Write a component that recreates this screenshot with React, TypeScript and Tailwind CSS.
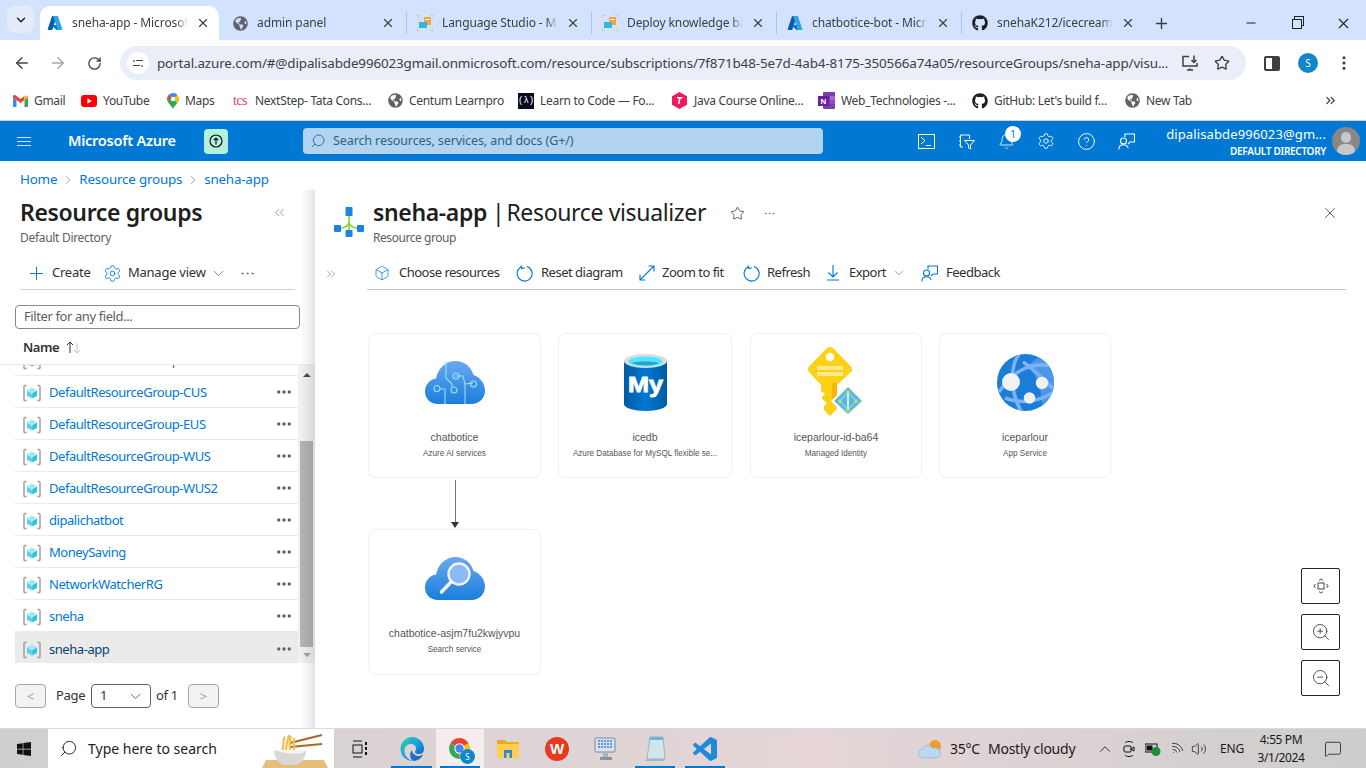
import {
  ArrowLeft, ArrowRight, RotateCw, Star, X, Plus, Minus, EllipsisVertical, Bell, Settings, CircleHelp,
  ChevronDown, ChevronUp, ChevronRight, ChevronsLeft, ChevronsRight, Box, ZoomIn, ZoomOut, Search, Ellipsis,
  Volume2, Wifi, MessageSquare,
} from 'lucide-react'
import { FaGithub, FaGlobeAmericas, FaWindows } from 'react-icons/fa'
import type { ReactNode } from 'react'

function AzureLogo({ size = 16 }: { size?: number }) {
  return (
    <svg width={size} height={size} viewBox="0 0 96 96">
      <path fill="#0a5cab" d="M33.34 6.54h26.04l-27.03 80.1a4.15 4.15 0 0 1-3.94 2.81H8.15a4.14 4.14 0 0 1-3.93-5.47L29.4 9.38a4.15 4.15 0 0 1 3.94-2.83z" />
      <path fill="#0078d4" d="M71.17 60.26H29.88a1.91 1.91 0 0 0-1.3 3.31l26.53 24.76a4.17 4.17 0 0 0 2.85 1.13h23.38z" />
      <path fill="#2fa4e7" d="M66.6 9.36a4.14 4.14 0 0 0-3.93-2.82H33.65a4.15 4.15 0 0 1 3.93 2.82l25.18 74.62a4.15 4.15 0 0 1-3.93 5.48h29.02a4.15 4.15 0 0 0 3.93-5.48z" />
    </svg>
  )
}

function StudioIcon() {
  return (
    <svg width="16" height="16" viewBox="0 0 16 16">
      <path d="M0 3V0h3M13 0h3v3M16 13v3h-3M3 16H0v-3" fill="none" stroke="#f0a33a" strokeWidth="0.8" />
      <rect x="7" y="2" width="7" height="8" fill="#f3a341" />
      <rect x="2" y="7" width="8" height="6" fill="#32b6dc" />
      <rect x="8.5" y="4" width="4" height="1" fill="#fff" />
    </svg>
  )
}

function GmailIcon() {
  return (
    <svg width="15" height="12" viewBox="0 0 15 12">
      <path d="M0 2v9a1 1 0 0 0 1 1h2.5V5z" fill="#4285f4" />
      <path d="M15 2v9a1 1 0 0 1-1 1h-2.5V5z" fill="#34a853" />
      <path d="M0 2l3.5 3L7.5 8 11.5 5V1L7.5 4 3.5 1 2 0H1.5A1.5 1.5 0 0 0 0 2z" fill="#ea4335" />
      <path d="M11.5 1v4L15 2.4V2a1.5 1.5 0 0 0-2.4-1.2z" fill="#fbbc04" />
    </svg>
  )
}

function YoutubeIcon() {
  return (
    <svg width="16" height="12" viewBox="0 0 16 12">
      <rect width="16" height="12" rx="3" fill="#f00" />
      <path d="M6.4 3.3 10.8 6l-4.4 2.7z" fill="#fff" />
    </svg>
  )
}

function MapsIcon() {
  return (
    <svg width="12" height="16" viewBox="0 0 12 16">
      <path d="M6 16C4.5 12.5 0 9.5 0 6h12c0 3.5-4.500 6.500-6 10z" fill="#34a853" />
      <path d="M0 6a6 6 0 0 1 2-4.400L6 6z" fill="#ea4335" />
      <path d="M2 1.600A6 6 0 0 1 10.500 2L6 6z" fill="#4285f4" />
      <path d="M10.500 2A6 6 0 0 1 12 6c0 1.500-1 3-2 4.200L6 6z" fill="#fbbc04" />
      <circle cx="6" cy="6" r="2.200" fill="#fff" />
    </svg>
  )
}

function FccIcon() {
  return (
    <div className="w-4 h-4 bg-[#0a0a23] text-white text-[9px] leading-4 text-center font-['Liberation_Mono',monospace]">(λ)</div>
  )
}

function JavaIcon() {
  return (
    <svg width="17" height="17" viewBox="0 0 17 17">
      <path d="M8.500 0 16 4.200v8.600L8.500 17 1 12.800V4.200z" fill="#ee1a5c" />
      <path d="M6 5h6l-1 1.500H9.500L8.500 12H7l1-5.500H6z" fill="#fff" />
    </svg>
  )
}

function OneNoteIcon() {
  return (
    <svg width="17" height="17" viewBox="0 0 17 17">
      <rect x="5" y="0" width="12" height="17" rx="1" fill="#7b3fb0" />
      <rect x="12" y="4" width="5" height="4" fill="#a566d6" />
      <rect x="12" y="8" width="5" height="4" fill="#8f4fc4" />
      <rect x="0" y="4" width="11" height="10" fill="#6a1f9e" />
      <text x="5.500" y="12" textAnchor="middle" fontSize="8" fontWeight="700" fill="#fff" fontFamily="Liberation Sans">N</text>
    </svg>
  )
}

const TABS: { label: string; icon: ReactNode; active?: boolean }[] = [
  { label: 'sneha-app - Microsoft Azure', icon: <AzureLogo />, active: true },
  { label: 'admin panel', icon: <FaGlobeAmericas size={15} color="#5f6368" /> },
  { label: 'Language Studio - Microsoft', icon: <StudioIcon /> },
  { label: 'Deploy knowledge base', icon: <StudioIcon /> },
  { label: 'chatbotice-bot - Microsoft', icon: <AzureLogo /> },
  { label: 'snehaK212/icecream_shop', icon: <FaGithub size={16} color="#1b1f23" /> },
]

function ChromeTab({ label, icon, active, last }: { label: string; icon: ReactNode; active?: boolean; last?: boolean }) {
  return (
    <div className="w-[185px] h-[34px] flex items-center shrink-0">
      <div className={active ? 'w-[179px] h-[34px] bg-white rounded-t-[10px] flex items-center pl-[7px]' : 'w-[181px] h-[34px] flex items-center pl-[7px]'}>
        <span className="w-4 flex justify-center shrink-0">{icon}</span>
        <span className="ml-[9px] w-[116px] whitespace-nowrap overflow-hidden text-[12px] text-[#3c4043] tracking-[-0.1px] [mask-image:linear-gradient(to_right,black_90%,transparent)]">{label}</span>
        <X size={14} strokeWidth={2} className="ml-[8px] text-[#3c4043] shrink-0" />
      </div>
      {!active && !last && <div className="w-px h-[22px] bg-[#a8c4ee]" />}
    </div>
  )
}

const BOOKMARKS: { label: string; icon: ReactNode; cls: string }[] = [
  { label: 'Gmail', icon: <GmailIcon />, cls: 'w-[68px]' },
  { label: 'YouTube', icon: <YoutubeIcon />, cls: 'w-[86px]' },
  { label: 'Maps', icon: <MapsIcon />, cls: 'w-[66px]' },
  { label: 'NextStep- Tata Cons...', icon: <span className="w-4 text-[14px] text-[#d6456c] font-['Liberation_Serif',serif] leading-none tracking-[-0.5px]">tcs</span>, cls: 'w-[155px]' },
  { label: 'Centum Learnpro', icon: <FaGlobeAmericas size={15} color="#5f6368" />, cls: 'w-[130px]' },
  { label: 'Learn to Code — Fo...', icon: <FccIcon />, cls: 'w-[153px]' },
  { label: 'Java Course Online...', icon: <JavaIcon />, cls: 'w-[147px]' },
  { label: 'Web_Technologies -...', icon: <OneNoteIcon />, cls: 'w-[154px]' },
  { label: "GitHub: Let's build f...", icon: <FaGithub size={16} color="#1b1f23" />, cls: 'w-[153px]' },
  { label: 'New Tab', icon: <FaGlobeAmericas size={15} color="#5f6368" />, cls: 'w-[80px]' },
]

function BrowserChrome() {
  return (
    <div className="shrink-0">
      <div className="h-10 bg-[#d3e3fd] flex items-end">
        <div className="w-[40px] h-[34px] self-end pl-[7px]">
          <div className="w-[27px] h-[27px] rounded-lg bg-[#e3ecfb] flex items-center justify-center">
            <ChevronDown size={14} strokeWidth={2.5} className="text-[#202124]" />
          </div>
        </div>
        {TABS.map((t, i) => <ChromeTab key={t.label} {...t} last={i === TABS.length - 1} />)}
        <div className="h-[34px] flex items-center ml-[3px]"><Plus size={17} strokeWidth={2} className="text-[#3c4043]" /></div>
        <div className="ml-auto h-[34px] flex items-center">
          <div className="w-[46px] flex justify-center"><Minus size={14} className="text-[#202124]" /></div>
          <div className="w-[46px] flex justify-center relative">
            <div className="w-[10px] h-[10px] border border-[#202124] mt-[2px] bg-[#d3e3fd] relative z-10" />
            <div className="absolute w-[10px] h-[10px] border border-[#202124] top-[-1px] left-[20px]" />
          </div>
          <div className="w-[46px] flex justify-center"><X size={17} strokeWidth={1.5} className="text-[#202124]" /></div>
        </div>
      </div>
      <div className="h-[41px] pt-[5px] bg-white flex items-center">
        <div className="w-[44px] flex justify-center"><ArrowLeft size={18} className="text-[#474747]" /></div>
        <div className="w-[28px] flex justify-center"><ArrowRight size={18} className="text-[#a8a8a8]" /></div>
        <div className="w-[44px] flex justify-center"><RotateCw size={15} strokeWidth={2.2} className="text-[#474747]" /></div>
        <div className="ml-[4px] w-[1126px] h-[34px] rounded-full bg-[#e9eef8] flex items-center">
          <div className="ml-[7px] w-[22px] h-[22px] rounded-full bg-white flex flex-col items-center justify-center gap-[3px]">
            <div className="flex items-center gap-[1px]"><span className="w-[2px] h-[2px] rounded-full border border-[#444]" /><span className="w-[7px] h-[1.500px] bg-[#444]" /></div>
            <div className="flex items-center gap-[1px]"><span className="w-[7px] h-[1.500px] bg-[#444]" /><span className="w-[2px] h-[2px] rounded-full border border-[#444]" /></div>
          </div>
          <span className="ml-[8px] w-[1014px] text-[13.430px] text-[#3c4043] whitespace-nowrap overflow-hidden tracking-[-0.13px]">portal.azure.com/#@dipalisabde996023gmail.onmicrosoft.com/resource/subscriptions/7f871b48-5e7d-4ab4-8175-350566a74a05/resourceGroups/sneha-app/visu...</span>
          <svg width="18" height="18" viewBox="0 0 18 18" className="ml-[10px]" fill="none" stroke="#3c4043" strokeWidth="1.500">
            <path d="M8 2.500H2v9.500h14V9" /><path d="M9 14.500v1M6 16h6" /><path d="M13 1.500v7M10.500 6l2.500 2.500L15.500 6" />
          </svg>
          <Star size={16} strokeWidth={2} className="ml-[15px] text-[#3c4043]" />
        </div>
        <div className="ml-[18px] w-[16px] h-[15px] border-2 border-[#3c4043] rounded-[2px] flex justify-end"><div className="w-[6px] bg-[#3c4043]" /></div>
        <div className="ml-[18px] w-5 h-5 rounded-full bg-[#0f87c9] text-white text-[10px] leading-5 text-center">S</div>
        <EllipsisVertical size={18} strokeWidth={2.2} className="ml-[17px] text-[#3c4043]" />
      </div>
      <div className="h-[40px] bg-white flex items-center pl-[13px] border-b border-[#cfcfcf]">
        {BOOKMARKS.map(b => (
          <div key={b.label} className={`${b.cls} flex items-center gap-[6px] shrink-0`}>
            {b.icon}
            <span className="text-[12px] text-[#3c4043] whitespace-nowrap tracking-[-0.3px]">{b.label}</span>
          </div>
        ))}
        <ChevronsRight size={15} strokeWidth={2} className="ml-[118px] text-[#3c4043]" />
      </div>
    </div>
  )
}

function PortalHeader() {
  return (
    <div className="h-10 bg-[#0078d4] flex items-center shrink-0 text-white">
      <div className="ml-[17px] w-[14px] flex flex-col gap-[3px]">
        <span className="h-px bg-[#cfe5f6]" /><span className="h-px bg-[#cfe5f6]" /><span className="h-px bg-[#cfe5f6]" />
      </div>
      <span className="ml-[37px] w-[136px] text-[14.5px] font-semibold tracking-[-0.25px] whitespace-nowrap">Microsoft Azure</span>
      <div className="w-6 h-[25px] rounded-sm bg-[#b4f1dc] flex items-center justify-center">
        <svg width="14" height="14" viewBox="0 0 14 14" fill="none" stroke="#111" strokeWidth="1.200">
          <circle cx="7" cy="7" r="6" /><path d="M7 10.500V4M4.800 6.200 7 4l2.200 2.200" />
        </svg>
      </div>
      <div className="ml-[75px] w-[520px] h-[26px] rounded-sm bg-[#b3d4f0] flex items-center">
        <Search size={16} strokeWidth={1.4} className="ml-[7px] text-[#2a6aa0] -scale-x-100" />
        <span className="ml-[7px] mt-px text-[12.500px] text-[#2f5f88] tracking-[-0.1px] whitespace-nowrap">Search resources, services, and docs (G+/)</span>
      </div>
      <div className="ml-[83px] flex items-center">
        <div className="w-10 flex justify-center">
          <svg width="17" height="15" viewBox="0 0 17 15" fill="none" stroke="#fff"><rect x="0.500" y="0.500" width="16" height="14" /><path d="m3 3 4 3.500L3 10M8 11.500h5" /></svg>
        </div>
        <div className="w-10 flex justify-center">
          <svg width="17" height="17" viewBox="0 0 17 17" fill="none" stroke="#fff"><path d="M5 14H2.500V2h9v4M1 4h2M1 8h2M1 12h2" /><path d="M6.500 7.500h10l-4 4.500v4l-2-1v-3z" /></svg>
        </div>
        <div className="w-10 flex justify-center relative">
          <Bell size={17} strokeWidth={1.2} />
          <span className="absolute -top-[7px] left-[19px] w-4 h-4 rounded-full bg-white text-[#0078d4] text-[10px] leading-4 text-center">1</span>
        </div>
        <div className="w-10 flex justify-center"><Settings size={18} strokeWidth={1.2} /></div>
        <div className="w-10 flex justify-center"><CircleHelp size={19} strokeWidth={1.2} /></div>
        <div className="w-10 flex justify-center"><FeedbackIcon color="#fff" /></div>
      </div>
      <div className="ml-auto flex flex-col items-end w-[170px] pt-[2px]">
        <span className="text-[13px] leading-[17px] whitespace-nowrap tracking-[0.12px]">dipalisabde996023@gm...</span>
        <span className="mt-[2px] text-[10px] leading-[13px] font-semibold whitespace-nowrap tracking-[-0.3px]">DEFAULT DIRECTORY</span>
      </div>
      <div className="ml-[6px] mr-[6px] w-7 h-7 rounded-full bg-[#8a8886] overflow-hidden relative">
        <div className="absolute left-[9px] top-[5px] w-[10px] h-[11px] rounded-full bg-[#c8c8c8]" />
        <div className="absolute left-[5px] top-[17px] w-[18px] h-[14px] rounded-full bg-[#c8c8c8]" />
      </div>
    </div>
  )
}

function FeedbackIcon({ color }: { color: string }) {
  return (
    <svg width="17" height="17" viewBox="0 0 17 17" fill="none" stroke={color} strokeWidth="1.100">
      <circle cx="5.500" cy="8" r="3" />
      <path d="M0.800 16.500c0-3 2-4.800 4.700-4.800s4.200 1.500 4.700 3.500" />
      <path d="M7 4V1h9.500v8H12l-2 2" />
    </svg>
  )
}

function GroupIcon() {
  return (
    <svg width="18" height="18" viewBox="0 0 18 18" className="shrink-0">
      <path d="M3.500 1.500H1.800a.8.8 0 0 0-.8.8v13.400a.8.8 0 0 0 .8.8h1.700M14.500 1.500h1.700a.8.8 0 0 1 .8.8v13.400a.8.8 0 0 1-.8.8h-1.700" fill="none" stroke="#9a9a9a" strokeWidth="1.400" />
      <path d="M9 3.500 14 6.200 9 9 4 6.200z" fill="#9debf7" />
      <path d="M4 6.500 8.800 9.200v5.300L4 11.800z" fill="#50d4f0" />
      <path d="M14 6.500 9.200 9.200v5.300L14 11.800z" fill="#2fbde6" />
    </svg>
  )
}

const GROUPS = [
  'DefaultResourceGroup-CID', 'DefaultResourceGroup-CUS', 'DefaultResourceGroup-EUS', 'DefaultResourceGroup-WUS',
  'DefaultResourceGroup-WUS2', 'dipalichatbot', 'MoneySaving', 'NetworkWatcherRG', 'sneha', 'sneha-app',
]

function LeftPanel() {
  return (
    <div className="w-[315px] shrink-0 relative flex flex-col">
      <div className="absolute right-0 inset-y-0 w-[15px] bg-gradient-to-r from-transparent to-black/10 pointer-events-none z-10" />
      <div className="mt-[6px] pl-5 pr-[28px] h-8 flex items-center justify-between">
        <span className="text-[23px] font-semibold text-[#201f1e] whitespace-nowrap tracking-[-0.35px]">Resource groups</span>
        <ChevronsLeft size={15} strokeWidth={1} className="text-[#605e5c]" />
      </div>
      <div className="pl-5 mt-[2px] h-4 text-[12px] leading-4 text-[#605e5c] tracking-[-0.3px]">Default Directory</div>
      <div className="mt-[11px] ml-5 w-[275px] h-[33px] flex items-center border-b border-[#d2d0ce] text-[13px] text-[#323130] tracking-[-0.25px]">
        <Plus size={21} strokeWidth={1.1} className="ml-[6px] text-[#0078d4]" />
        <span className="ml-[5px] w-[37px] whitespace-nowrap">Create</span>
        <Settings size={19} strokeWidth={1.1} className="ml-[14px] text-[#0078d4]" />
        <span className="ml-[6px] w-[76px] whitespace-nowrap">Manage view</span>
        <ChevronDown size={17} strokeWidth={1} className="ml-[6px] text-[#605e5c]" />
        <Ellipsis size={17} strokeWidth={1} className="ml-[12px] text-[#605e5c]" />
      </div>
      <div className="mt-[15px] ml-[15px] w-[285px] h-6 rounded-sm border border-[#8a8886] flex items-center pl-2 text-[13px] text-[#605e5c] tracking-[-0.4px]">Filter for any field...</div>
      <div className="ml-[23px] h-[35px] pt-[2px] flex items-center text-[13px] font-semibold text-[#323130] tracking-[-0.5px]">
        <span className="w-[43px]">Name</span>
        <svg width="16" height="13" viewBox="0 0 16 13" fill="none">
          <path d="M4 12V1M1 4l3-3 3 3" stroke="#323130" />
          <path d="M11 2v10M8 9l3 3 3-3" stroke="#c8c6c4" />
        </svg>
      </div>
      <div className="flex h-[299px] border-t border-[#edebe9]">
        <div className="ml-[15px] w-[283px] overflow-hidden">
          <div className="-mt-[21px]">
            {GROUPS.map(g => (
              <div key={g} className={g === 'sneha-app' ? 'h-8 pt-[3px] flex items-center bg-[#edebe9] pl-2' : 'h-8 pt-[3px] flex items-center border-b border-[#edebe9] pl-2'}>
                <GroupIcon />
                <span className={g === 'sneha-app' ? 'ml-2 text-[13px] text-[#004578] tracking-[-0.45px]' : 'ml-2 text-[13px] text-[#0078d4] tracking-[-0.45px]'}>{g}</span>
                <Ellipsis size={18} strokeWidth={2.4} className="ml-auto mr-[5px] -mt-[2px] text-[#605e5c]" />
              </div>
            ))}
          </div>
        </div>
        <div className="w-[17px] bg-[#f1f1f1] flex flex-col items-center">
          <div className="h-[76px] w-full flex justify-center pt-[8px]">
            <div className="w-0 h-0 border-x-[4px] border-x-transparent border-b-[4px] border-b-[#505050]" />
          </div>
          <div className="w-[13px] h-[206px] bg-[#b4b4b4]" />
          <div className="mt-[6px] w-0 h-0 border-x-[4px] border-x-transparent border-t-[4px] border-t-[#a0a0a0]" />
        </div>
      </div>
      <div className="mt-[21px] ml-[15px] flex items-center h-6 text-[13px] text-[#323130]">
        <div className="w-[31px] h-6 border border-[#a8a6a4] bg-[#f3f2f1] rounded-sm text-center text-[#a19f9d] leading-[22px]">&lt;</div>
        <span className="ml-[10px] w-[35px] tracking-[-0.3px]">Page</span>
        <div className="w-[60px] h-6 border border-[#605e5c] rounded-sm flex items-center pl-2">
          1
          <ChevronDown size={17} strokeWidth={1} className="ml-auto mr-[6px]" />
        </div>
        <span className="ml-[5px] w-[32px] tracking-[-0.3px]">of 1</span>
        <div className="w-[31px] h-6 border border-[#a8a6a4] bg-[#f3f2f1] rounded-sm text-center text-[#a19f9d] leading-[22px]">&gt;</div>
      </div>
    </div>
  )
}

function ResetIcon() {
  return (
    <svg width="17" height="17" viewBox="0 0 17 17" fill="none" stroke="#0078d4" strokeWidth="1.100">
      <path d="M5.500 1.800A7.500 7.500 0 1 0 11 1.500" />
      <path d="M5 .5l.8 3 3-.8" />
    </svg>
  )
}

function BladeToolbar() {
  const cls = 'text-[13px] text-[#323130] whitespace-nowrap tracking-[-0.5px]'
  return (
    <div className="flex h-[33px]">
      <div className="w-[52px] pl-[9px] flex items-center"><ChevronsRight size={14} strokeWidth={1} className="text-[#605e5c]" /></div>
      <div className="flex-1 mr-[20px] flex items-center border-b border-[#c8c6c4]">
        <Box size={16} strokeWidth={1.1} className="ml-[7px] text-[#0078d4]" />
        <span className={`${cls} ml-[9px] w-[102px]`}>Choose resources</span>
        <span className="ml-[15px]"><ResetIcon /></span>
        <span className={`${cls} ml-[8px] w-[82px]`}>Reset diagram</span>
        <svg width="16" height="16" viewBox="0 0 16 16" className="ml-[16px]" fill="none" stroke="#0078d4" strokeWidth="1.100"><path d="M1 15 15 1M9.500 1H15v5.500M1 9.500V15h5.500" /></svg>
        <span className={`${cls} ml-[7px] w-[65px]`}>Zoom to fit</span>
        <span className="ml-[16px]"><ResetIcon /></span>
        <span className={`${cls} ml-[7px] w-[43px]`}>Refresh</span>
        <svg width="14" height="16" viewBox="0 0 14 16" className="ml-[16px]" fill="none" stroke="#0078d4" strokeWidth="1.100"><path d="M7 0v12M2.500 7.500 7 12l4.500-4.500M1 15h12" /></svg>
        <span className={`${cls} ml-[9px] w-[37px]`}>Export</span>
        <ChevronDown size={14} strokeWidth={1} className="ml-[6px] text-[#605e5c]" />
        <span className="ml-[15px]"><FeedbackIcon color="#0078d4" /></span>
        <span className={`${cls} ml-[8px]`}>Feedback</span>
      </div>
    </div>
  )
}

function Cloud({ id, children }: { id: string; children?: ReactNode }) {
  return (
    <svg width="60" height="43" viewBox="0 0 60 43">
      <defs>
        <linearGradient id={id} x1="0" y1="0" x2="0" y2="1">
          <stop offset="0" stopColor="#6ba8f1" />
          <stop offset="1" stopColor="#1a7fdb" />
        </linearGradient>
      </defs>
      <path d="M13 43C5.500 43 0 37.500 0 30.500 0 24 4.500 18.500 11 17.500 13 7.500 20.500 0 30.500 0 39 0 46 5.500 48.500 14 55 16 60 22.500 60 29.500 60 37.500 54 43 46.500 43z" fill={`url(#${id})`} />
      {children}
    </svg>
  )
}

function AiIcon() {
  return (
    <Cloud id="aiCloud">
      <g fill="none" stroke="#9fdcf8" strokeWidth="1.100">
        <path d="M21 0v17l6 6v3M20 43V28h-5" />
        <circle cx="12" cy="27.500" r="3" />
        <circle cx="29" cy="29" r="3" />
        <path d="M40 43V23l8-1" />
        <circle cx="48.500" cy="23" r="3" />
        <path d="M30 15h8l2 8" />
        <circle cx="31" cy="15" r="3" />
      </g>
    </Cloud>
  )
}

function SearchCloud() {
  return (
    <Cloud id="searchCloud">
      <circle cx="34" cy="17" r="10.500" fill="#8ab9f7" stroke="#f2f2f2" strokeWidth="2.400" />
      <path d="M26 25 16.500 35" stroke="#f2f2f2" strokeWidth="3.600" strokeLinecap="round" />
    </Cloud>
  )
}

function MySqlIcon() {
  return (
    <svg width="43" height="57" viewBox="0 0 43 57">
      <defs>
        <linearGradient id="mysqlBody" x1="0" y1="0" x2="1" y2="0">
          <stop offset="0" stopColor="#005ba1" />
          <stop offset="0.5" stopColor="#0078d4" />
          <stop offset="1" stopColor="#005ba1" />
        </linearGradient>
      </defs>
      <path d="M0 7v43c0 4 10 7 21.500 7S43 54 43 50V7z" fill="url(#mysqlBody)" />
      <ellipse cx="21.500" cy="7" rx="21.500" ry="7" fill="#d9dde0" />
      <ellipse cx="21.500" cy="7.500" rx="17" ry="5" fill="#50e6ff" />
      <path d="M8 9c4-2 22-2 27 0-4 3-23 3-27 0z" fill="#2aa3c8" />
      <text x="21.500" y="38" textAnchor="middle" fontSize="22" fontWeight="700" fill="#fff" stroke="#fff" strokeWidth="0.8" fontFamily="Liberation Sans" textLength="35" lengthAdjust="spacingAndGlyphs">My</text>
    </svg>
  )
}

function KeyIcon() {
  return (
    <svg width="57" height="70" viewBox="0 0 57 70">
      <path d="M22 0c1.500 0 2.500.5 3.500 1.500L42.500 19c2 2 2 4.500 0 6.500L29 38V62L22 69 16 63V59L19 56 14 52V50L17 47 13 44V38L1.500 25.500c-2-2-2-4.500 0-6.500L18.500 1.500C19.500.5 20.500 0 22 0z" fill="#fcd116" />
      <path d="M24 36h5v16h-5z" fill="#f7a707" opacity=".7" />
      <circle cx="22" cy="10" r="4.200" fill="#fff" />
      <rect x="9" y="19" width="26" height="4" fill="#ffe98a" />
      <rect x="9" y="25" width="26" height="4" fill="#ffe98a" />
      <path d="M40 37 57 54 40 70 23 54z" fill="#fff" />
      <path d="M40 40 54 54 40 67 26 54z" fill="#5ab9dc" />
      <path d="M40 45 48 54 40 63 32 54z" fill="none" stroke="#c6e9f5" strokeWidth=".8" />
      <path d="M40 45v18" stroke="#fff" strokeWidth="1.500" />
      <circle cx="40" cy="45" r="1.800" fill="#c5e05a" />
      <circle cx="32" cy="54" r="1.800" fill="#c5e05a" />
      <circle cx="48" cy="54" r="1.800" fill="#c5e05a" />
      <circle cx="40" cy="63" r="1.800" fill="#c5e05a" />
    </svg>
  )
}

function AppServiceIcon() {
  return (
    <svg width="57" height="57" viewBox="0 0 57 57">
      <defs>
        <clipPath id="globeClip"><circle cx="28.500" cy="28.500" r="28.500" /></clipPath>
      </defs>
      <circle cx="28.500" cy="28.500" r="28.500" fill="#1a7ed8" />
      <g clipPath="url(#globeClip)">
        <path d="M30 12c10 8 14 20 16 45h11V10L40 4z" fill="#5a9eec" opacity=".8" />
        <g fill="none" stroke="#7db2f2" strokeWidth="3.500">
          <path d="M2 38C18 14 36 8 57 12" />
          <path d="M22 0C12 14 14 40 24 57" />
          <path d="M8 44c16 6 34 4 49-6" />
          <path d="M26 8c10 6 20 18 30 26" />
        </g>
      </g>
      <circle cx="14" cy="28" r="9" fill="#f2f2f2" />
      <circle cx="45" cy="29" r="6.200" fill="#f2f2f2" />
      <circle cx="32.500" cy="44" r="5.800" fill="#f2f2f2" />
    </svg>
  )
}

function NodeCard({ cls, name, kind, children }: { cls: string; name: string; kind: string; children: ReactNode }) {
  return (
    <div className={`absolute ${cls} rounded-lg border border-[#f2f2f2] bg-white shadow-[0_0_2px_rgba(0,0,0,0.04)] flex flex-col items-center font-['Liberation_Sans',sans-serif]`}>
      <div className="h-[98px] -mt-px flex items-center justify-center">{children}</div>
      <div className="h-3 text-[10.500px] leading-3 text-[#555] whitespace-nowrap">{name}</div>
      <div className="h-[22px] text-[8.150px] leading-[22px] text-[#555] whitespace-nowrap">{kind}</div>
    </div>
  )
}

function MapButton({ children }: { children: ReactNode }) {
  return (
    <div className="w-[39px] h-[36px] rounded-[2px] border border-[#222] bg-white flex items-center justify-center">{children}</div>
  )
}

function RightBlade() {
  return (
    <div className="flex-1 flex flex-col min-w-0">
      <div className="h-[67px] flex items-start relative">
        <svg width="32" height="30" viewBox="0 0 32 30" className="ml-[18px] mt-[17px]" fill="none">
          <path d="M16 6v20M16 15c0 4-6 6-10 7M16 15c0 4 6 6 10 7" stroke="#86d633" strokeWidth="1.600" />
          <rect x="12.500" y="0" width="7" height="9" rx="1" fill="#1b84de" />
          <rect x="1" y="18" width="7" height="7" rx="1" fill="#1b84de" />
          <rect x="24" y="18" width="7" height="7" rx="1" fill="#1b84de" />
          <rect x="12.500" y="23" width="7" height="7" rx="1" fill="#1b84de" />
        </svg>
        <div className="ml-[8px] mt-[6px]">
          <div className="h-8 flex items-center text-[23px] text-[#201f1e] whitespace-nowrap tracking-[-0.35px]">
            <span className="font-semibold">sneha-app</span>
            <span className="ml-[5px]">|</span>
            <span className="ml-[2px]">Resource visualizer</span>
          </div>
          <div className="mt-[2px] h-4 text-[12px] leading-4 text-[#605e5c] tracking-[-0.45px]">Resource group</div>
        </div>
        <Star size={15} strokeWidth={1.2} className="ml-[24px] mt-[16px] text-[#323130]" />
        <Ellipsis size={13} strokeWidth={1} className="ml-[18px] mt-[17px] text-[#605e5c]" />
        <X size={18} strokeWidth={1} className="absolute left-[1006px] top-[14px] text-[#323130]" />
      </div>
      <BladeToolbar />
      <div className="flex-1 relative">
        <NodeCard cls="left-[53px] top-[43px] w-[173px] h-[145px]" name="chatbotice" kind="Azure AI services"><AiIcon /></NodeCard>
        <NodeCard cls="left-[243px] top-[43px] w-[174px] h-[145px]" name="icedb" kind="Azure Database for MySQL flexible se..."><MySqlIcon /></NodeCard>
        <NodeCard cls="left-[435px] top-[43px] w-[172px] h-[145px]" name="iceparlour-id-ba64" kind="Managed Identity"><KeyIcon /></NodeCard>
        <NodeCard cls="left-[624px] top-[43px] w-[172px] h-[145px]" name="iceparlour" kind="App Service"><AppServiceIcon /></NodeCard>
        <NodeCard cls="left-[53px] top-[239px] w-[173px] h-[146px]" name="chatbotice-asjm7fu2kwjyvpu" kind="Search service"><SearchCloud /></NodeCard>
        <div className="absolute left-[139.500px] top-[190px] w-px h-[43px] bg-[#777]" />
        <div className="absolute left-[136px] top-[232px] w-0 h-0 border-x-[4px] border-x-transparent border-t-[6px] border-t-[#333]" />
        <div className="absolute left-[986px] top-[278px] flex flex-col gap-[10px]">
          <MapButton>
            <svg width="16" height="16" viewBox="0 0 16 16" fill="none" stroke="#444" strokeWidth="1">
              <rect x="5" y="5" width="6" height="6" /><path d="M6 2.500 8 .8l2 1.700M6 13.500l2 1.700 2-1.700M2.500 6 .8 8l1.700 2M13.500 6l1.700 2-1.700 2" />
            </svg>
          </MapButton>
          <MapButton><ZoomIn size={20} strokeWidth={1} className="text-[#333]" /></MapButton>
          <MapButton><ZoomOut size={20} strokeWidth={1} className="text-[#333]" /></MapButton>
        </div>
      </div>
    </div>
  )
}

function NoodleBowl() {
  return (
    <svg width="68" height="38" viewBox="0 0 68 38">
      <path d="M4 30h58l4 8H0z" fill="#e3bf7a" />
      <path d="M28 13 60 5M28 17l32-3" stroke="#a8682c" strokeWidth="2" />
      <path d="M20 21c3-6 0-12 3-14M24 21c0-6 2-12 3-16M28 21c0-5-1-10 1-15M32 21c1-5-1-9 0-13" stroke="#efc24a" strokeWidth="2.200" fill="none" />
      <path d="M12 20h32c0 9-6 14-10 15H22c-4-1-10-6-10-15z" fill="#d8d8d8" />
      <path d="M12 20h32c-1 4-14 6-32 0z" fill="#f5f5f5" />
    </svg>
  )
}

function ChromeIcon() {
  return (
    <div className="relative w-[26px] h-[26px]">
      <svg width="25" height="25" viewBox="0 0 24 24">
        <path d="M12 12 3.340 7A10 10 0 0 1 20.660 7z" fill="#ea4335" />
        <path d="M12 12 20.660 7A10 10 0 0 1 12 22z" fill="#fbbc04" />
        <path d="M12 12 12 22A10 10 0 0 1 3.340 7z" fill="#34a853" />
        <circle cx="12" cy="12" r="5" fill="#fff" />
        <circle cx="12" cy="12" r="4" fill="#4285f4" />
      </svg>
      <span className="absolute -right-[2px] -bottom-[2px] w-[15px] h-[15px] rounded-full bg-[#0f87c9] text-white text-[8px] leading-[15px] text-center">S</span>
    </div>
  )
}

function Taskbar() {
  return (
    <div className="h-10 shrink-0 flex items-center border-t border-[#d9d9d9] bg-gradient-to-r from-[#cfcfcf] via-[#e6d6d8] via-60% to-[#cdcdcd] text-[#1a1a1a]">
      <div className="w-12 flex justify-center"><FaWindows size={16} color="#111" /></div>
      <div className="w-[286px] h-[39px] bg-white flex items-center relative overflow-hidden">
        <Search size={19} strokeWidth={1.2} className="ml-[11px] -scale-x-100 text-[#222]" />
        <span className="ml-[10px] text-[14px] text-[#222] whitespace-nowrap">Type here to search</span>
        <div className="absolute right-[4px] bottom-0"><NoodleBowl /></div>
      </div>
      <div className="ml-[17px] w-[18px] flex flex-col items-center">
        <svg width="16" height="18" viewBox="0 0 16 18" fill="none" stroke="#111"><path d="M1 1h9M1 17h9" /><rect x="1" y="5" width="9" height="8" /><path d="M14 2v3M14 7v3M14 12v3" strokeWidth="2" /></svg>
      </div>
      <TaskSlot cls="ml-[18px] w-[49px]" active>
        <svg width="24" height="24" viewBox="0 0 24 24">
          <defs><linearGradient id="edgeG" x1="0" y1="0" x2="1" y2="1"><stop offset="0" stopColor="#39d2a3" /><stop offset="0.5" stopColor="#1b9de2" /><stop offset="1" stopColor="#0b53a8" /></linearGradient></defs>
          <path d="M12 0a12 12 0 0 1 12 12c0 3-2 5-5 5-2 0-4-.5-4-2 0-1 1-1.500 1-3.500C16 8 13 6.500 10 7c-4 .8-6 4-5.500 8 .5 4 3.500 8 8.500 9A12 12 0 0 1 12 0z" fill="url(#edgeG)" />
          <path d="M13 24c5 0 9-3 10-7-3 3-6 2-8 1-2-1-3-3-3-5-3 3-2 9 1 11z" fill="#1f6fc9" />
        </svg>
      </TaskSlot>
      <TaskSlot cls="w-[48px] bg-[#f3edee]" active><ChromeIcon /></TaskSlot>
      <TaskSlot cls="w-[48px]">
        <svg width="22" height="22" viewBox="0 0 22 22"><path d="M0 2h8l2 2h12v4H0z" fill="#e9a92a" /><path d="M0 6h22v14H0z" fill="#ffd04d" /><rect x="7" y="12" width="8" height="8" fill="#2a8cd8" /><rect x="9.500" y="15" width="3" height="5" fill="#ffd04d" /></svg>
      </TaskSlot>
      <TaskSlot cls="w-[50px]">
        <div className="w-6 h-6 rounded-full bg-[#e8391e] text-white text-[15px] leading-6 text-center font-bold font-['Liberation_Sans',sans-serif]">W</div>
      </TaskSlot>
      <TaskSlot cls="w-[48px]">
        <svg width="24" height="26" viewBox="0 0 24 26"><rect x="1" y="2" width="20" height="14" rx="1" fill="#d8e2ee" stroke="#7b8ba0" /><path d="M4 5h14M4 8h14M4 11h14" stroke="#3f7fd0" strokeWidth="1.500" strokeDasharray="2 1" /><path d="M9 16v5h5v-5" fill="#aab2bb" /><rect x="6" y="21" width="12" height="3" fill="#8c949c" /></svg>
      </TaskSlot>
      <TaskSlot cls="ml-[1px] w-[48px]" active>
        <svg width="22" height="26" viewBox="0 0 22 26"><path d="M6 1h13l2 22H3z" fill="#cfe6ec" stroke="#8aa0a8" strokeWidth=".7" /><path d="M6 1h13v3H5.500z" fill="#6db7d4" /><path d="M3 23 1 25h18l2-2z" fill="#a9b4b8" /></svg>
      </TaskSlot>
      <TaskSlot cls="ml-[2px] w-[48px]" active>
        <svg width="24" height="24" viewBox="0 0 24 24"><path fill="#1f8bd8" d="M23.150 2.587L18.210.21a1.494 1.494 0 0 0-1.705.29l-9.460 8.630-4.120-3.128a.999.999 0 0 0-1.276.057L.327 7.261A1 1 0 0 0 .326 8.740L3.899 12 .326 15.260a1 1 0 0 0 .001 1.479L1.650 17.940a.999.999 0 0 0 1.276.057l4.120-3.128 9.460 8.630a1.492 1.492 0 0 0 1.704.29l4.942-2.377A1.500 1.500 0 0 0 24 20.060V3.939a1.500 1.500 0 0 0-.85-1.352zm-5.146 14.861L10.826 12l7.178-5.448v10.896z" /></svg>
      </TaskSlot>
      <svg width="25" height="20" viewBox="0 0 25 20" className="ml-[189px]">
        <circle cx="17" cy="7" r="6" fill="#f39c2d" />
        <path d="M5 19a4.500 4.500 0 0 1-.5-9C6 5.500 12 5 14.500 9c4-1 8 1.500 8 5.500 0 2.500-2 4.500-4 4.500z" fill="#bcd7ef" stroke="#7fb0dc" strokeWidth=".6" />
      </svg>
      <span className="ml-[7px] w-[38px] text-[14px] tracking-[-0.25px] whitespace-nowrap">35°C</span>
      <span className="text-[14px] tracking-[-0.25px] whitespace-nowrap w-[108px]">Mostly cloudy</span>
      <ChevronUp size={18} strokeWidth={1.2} />
      <svg width="12" height="18" viewBox="0 0 12 18" className="ml-[9px]" fill="none" stroke="#111"><path d="M2 3c1-2 7-2 8 0M2 15c1 2 7 2 8 0" /><rect x="1" y="6" width="7" height="6" rx="1" /><path d="M8 9l3-2v4z" /></svg>
      <svg width="16" height="14" viewBox="0 0 16 14" className="ml-[10px]"><rect x="0" y="2" width="12" height="8" fill="none" stroke="#111" /><rect x="1.500" y="3.500" width="6" height="5" fill="#111" /><circle cx="11" cy="9.500" r="4.500" fill="#1a8f3c" /></svg>
      <Wifi size={15} strokeWidth={1.2} className="ml-[8px] rotate-[35deg] text-[#222]" />
      <Volume2 size={16} strokeWidth={1.2} className="ml-[7px] text-[#222]" />
      <span className="ml-[13px] w-[24px] text-[12px] tracking-[-0.2px]">ENG</span>
      <div className="ml-[9px] w-[56px] flex flex-col items-center text-[12px] leading-[18px] tracking-[-0.4px] whitespace-nowrap">
        <span>4:55 PM</span>
        <span>3/1/2024</span>
      </div>
      <MessageSquare size={18} strokeWidth={1.1} className="ml-[15px] text-[#222]" />
    </div>
  )
}

function TaskSlot({ cls, active, children }: { cls: string; active?: boolean; children: ReactNode }) {
  return (
    <div className={`${cls} h-[39px] flex items-center justify-center relative shrink-0`}>
      {children}
      {active && <div className="absolute bottom-0 inset-x-[4px] h-[2px] bg-[#0078d4]" />}
    </div>
  )
}

export default function App() {
  return (
    <div className="w-[1366px] h-[768px] overflow-hidden flex flex-col bg-white font-['Noto_Sans',sans-serif]">
      <BrowserChrome />
      <PortalHeader />
      <div className="h-[29px] shrink-0 pl-5 pt-[8px] flex items-center text-[13.400px] text-[#0078d4] tracking-[-0.2px]">
        Home
        <ChevronRight size={14} strokeWidth={1} className="mx-[4px] text-[#605e5c]" />
        Resource groups
        <ChevronRight size={14} strokeWidth={1} className="mx-[4px] text-[#605e5c]" />
        sneha-app
      </div>
      <div className="flex-1 flex min-h-0">
        <LeftPanel />
        <RightBlade />
      </div>
      <Taskbar />
    </div>
  )
}
